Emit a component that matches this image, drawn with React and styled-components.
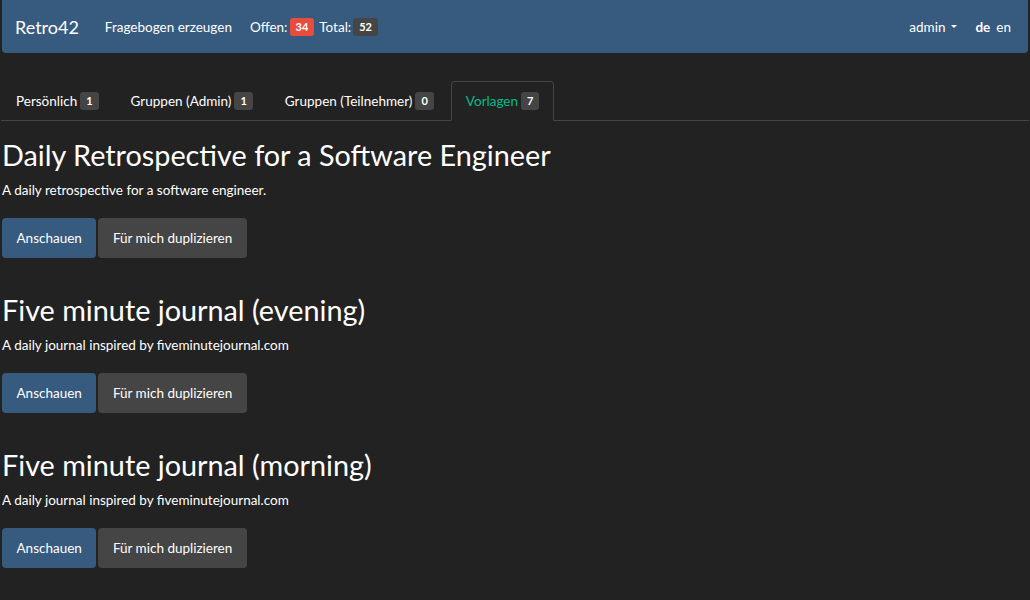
import React from "react";
import styled, { createGlobalStyle } from "styled-components";

const GlobalStyle = createGlobalStyle`
    html, body {
        margin: 0;
        padding: 0;
        background: #222222;
    }
    body {
        font-family: Lato, "Helvetica Neue", Arial, sans-serif;
        font-size: 13.5px;
        color: #ffffff;
    }
    * {
        box-sizing: border-box;
    }
`;

const Navbar = styled.nav`
    display: flex;
    align-items: center;
    height: 53px;
    margin: 0 2px;
    padding: 0 17px 0 13px;
    background: #375a7f;
    border-radius: 0 0 4px 4px;
`;

const Brand = styled.span`
    font-size: 18px;
    color: #ffffff;
    margin-right: 26px;
    line-height: 20px;
`;

const NavItem = styled.span`
    display: flex;
    align-items: center;
    gap: 2px;
    font-size: 13.5px;
    color: #ffffff;
    margin-right: ${({ gap }) => gap || 0}px;
    font-weight: ${({ bold }) => (bold ? 700 : 400)};
`;

const NavRight = styled.div`
    display: flex;
    align-items: center;
    margin-left: auto;
`;

const Caret = styled.span`
    display: inline-block;
    width: 0;
    height: 0;
    margin-left: 4px;
    border-top: 3px solid #ffffff;
    border-left: 3px solid transparent;
    border-right: 3px solid transparent;
`;

const Badge = styled.span`
    display: inline-block;
    padding: 3px 6px;
    font-size: 11px;
    line-height: 12px;
    font-weight: 700;
    color: #ffffff;
    background: ${({ danger }) => (danger ? "#e74c3c" : "#464545")};
    border-radius: 3px;
    margin-left: ${({ offset }) => offset || 0}px;
`;

const Page = styled.div`
    padding: 28px 1px 0;
`;

const Tabs = styled.ul`
    display: flex;
    list-style: none;
    margin: 0;
    padding: 0;
    border-bottom: 1px solid #464545;
`;

const Tab = styled.li`
    display: flex;
    align-items: center;
    height: 40px;
    margin: 0 2px -1px 0;
    padding: 0 14px;
    font-size: 13.5px;
    color: ${({ active }) => (active ? "#00bc8c" : "#ffffff")};
    background: ${({ active }) => (active ? "#222222" : "transparent")};
    border: 1px solid ${({ active }) => (active ? "#464545" : "transparent")};
    border-bottom-color: ${({ active }) => (active ? "#222222" : "transparent")};
    border-radius: 4px 4px 0 0;
    cursor: pointer;
`;

const Template = styled.section`
    padding: 0 0 18px 1px;
`;

const Title = styled.h3`
    margin: 18px 0 9px;
    font-size: 28.8px;
    line-height: 32px;
    font-weight: 400;
    color: #ffffff;
`;

const Description = styled.p`
    margin: 0 0 18px;
    font-size: 13.5px;
    line-height: 20px;
`;

const Buttons = styled.div`
    display: flex;
    gap: 2px;
`;

const Button = styled.button`
    height: 40px;
    padding: 0 14.5px;
    font-family: inherit;
    font-size: 13.5px;
    color: #ffffff;
    background: ${({ primary }) => (primary ? "#375a7f" : "#464545")};
    border: none;
    border-radius: 4px;
    cursor: pointer;
`;

const tabs = [
    { name: "Persönlich", count: 1 },
    { name: "Gruppen (Admin)", count: 1 },
    { name: "Gruppen (Teilnehmer)", count: 0 },
    { name: "Vorlagen", count: 7, active: true },
];

const templates = [
    {
        title: "Daily Retrospective for a Software Engineer",
        description: "A daily retrospective for a software engineer.",
    },
    {
        title: "Five minute journal (evening)",
        description: "A daily journal inspired by fiveminutejournal.com",
    },
    {
        title: "Five minute journal (morning)",
        description: "A daily journal inspired by fiveminutejournal.com",
    },
];

export default function App() {
    return (
        <>
            <GlobalStyle />
            <Navbar>
                <Brand>Retro42</Brand>
                <NavItem gap={18}>Fragebogen erzeugen</NavItem>
                <NavItem gap={5}>
                    Offen:<Badge danger>34</Badge>
                </NavItem>
                <NavItem>
                    Total:<Badge>52</Badge>
                </NavItem>
                <NavRight>
                    <NavItem gap={18}>
                        admin
                        <Caret />
                    </NavItem>
                    <NavItem gap={6} bold>de</NavItem>
                    <NavItem>en</NavItem>
                </NavRight>
            </Navbar>
            <Page>
                <Tabs>
                    {tabs.map((tab) => (
                        <Tab key={tab.name} active={tab.active}>
                            {tab.name}
                            <Badge offset={3}>{tab.count}</Badge>
                        </Tab>
                    ))}
                </Tabs>
                {templates.map((t) => (
                    <Template key={t.title}>
                        <Title>{t.title}</Title>
                        <Description>{t.description}</Description>
                        <Buttons>
                            <Button primary>Anschauen</Button>
                            <Button>Für mich duplizieren</Button>
                        </Buttons>
                    </Template>
                ))}
            </Page>
        </>
    );
}
